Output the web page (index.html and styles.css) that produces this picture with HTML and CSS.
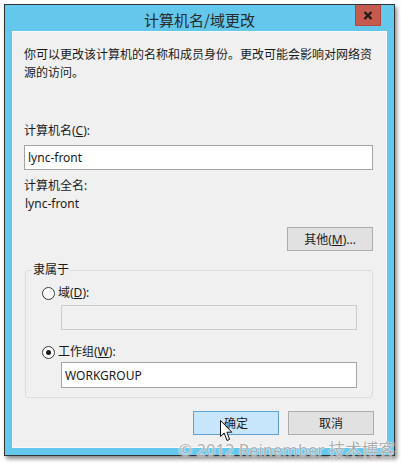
FILE: index.html
```html
<!DOCTYPE html>
<html lang="zh-CN">
<head>
    <meta charset="UTF-8">
    <meta name="viewport" content="width=device-width, initial-scale=1.0">
    <title>计算机名/域更改</title>
    <link rel="stylesheet" href="styles.css">
</head>
<body>
    <div class="window">
        <div class="titlebar">
            <span class="title">计算机名/域更改</span>
            <button class="close" type="button" aria-label="关闭">
                <svg width="10" height="9" viewBox="0 0 10 9">
                    <path d="M1.5 1 L8.5 8 M8.5 1 L1.5 8" stroke="#1a1a1a" stroke-width="2.2" fill="none"/>
                </svg>
            </button>
        </div>

        <div class="client">
            <p class="desc">你可以更改该计算机的名称和成员身份。更改可能会影响对网络资源的访问。</p>

            <label class="label first" for="pc-name">计算机名(<u>C</u>):</label>
            <input class="textbox" id="pc-name" type="text" value="lync-front">

            <div class="label full">计算机全名:</div>
            <div class="value">lync-front</div>

            <div class="more-row">
                <button class="btn" type="button">其他(<u>M</u>)...</button>
            </div>

            <fieldset class="member">
                <legend>隶属于</legend>

                <div class="radio-row first">
                    <span class="radio"></span>
                    <span>域(<u>D</u>):</span>
                </div>
                <input class="textbox sub" type="text" disabled>

                <div class="radio-row second">
                    <span class="radio checked"></span>
                    <span>工作组(<u>W</u>):</span>
                </div>
                <input class="textbox sub wg" type="text" value="WORKGROUP">
            </fieldset>

            <div class="actions">
                <button class="btn hover" type="button">确定</button>
                <button class="btn" type="button">取消</button>
            </div>
        </div>
    </div>

    <!-- mouse pointer over the OK button -->
    <svg class="cursor" width="13" height="22" viewBox="0 0 13 22">
        <path d="M0.5 0.5 L0.5 16.5 L4.2 13 L7 20.5 L9.6 19.4 L6.9 12.2 L11.8 12.2 Z" fill="#fff" stroke="#111" stroke-width="1" stroke-linejoin="miter"/>
    </svg>

    <div class="watermark">© 2012 Reinember 技术博客</div>
</body>
</html>
```

FILE: styles.css
```css
html, body {
    margin: 0;
    padding: 0;
    background: #ffffff;
}
body {
    width: 401px;
    height: 463px;
    overflow: hidden;
    position: relative;
    font-family: "Noto Sans", "Noto Sans CJK SC", sans-serif;
    font-size: 12px;
    color: #1a1a1a;
}
.window {
    margin: 4px 0 0 4px;
    width: 391px;
    height: 452px;
    box-sizing: border-box;
    border: 1px solid #333;
    background: #64c8ec;
    padding: 0 7px 7px 7px;
    box-shadow: 2px 3px 4px rgba(0,0,0,0.45);
}
.titlebar {
    height: 26px;
    display: flex;
    align-items: center;
    justify-content: center;
    position: relative;
}
.title {
    font-family: "Noto Sans CJK SC", sans-serif;
    font-size: 15px;
    color: #2a2a2a;
    margin-top: 3px;
}
.close {
    position: absolute;
    top: 0;
    right: 6px;
    width: 26px;
    height: 21px;
    padding: 0;
    border: 1px solid #b0483f;
    border-top: none;
    background: #c75a4f;
    display: flex;
    align-items: center;
    justify-content: center;
}
.client {
    height: 417px;
    box-sizing: border-box;
    background: #f0f0f0;
    border: 1px solid #f8f8f8;
    padding: 14px 13px 0 11px;
}
.desc {
    margin: 0;
    line-height: 18px;
}
.label {
    line-height: 18px;
    display: block;
}
.label.first {
    margin-top: 40px;
}
.label.full {
    margin-top: 7px;
}
.value {
    line-height: 17px;
    padding-left: 1px;
}
.textbox {
    display: block;
    box-sizing: border-box;
    width: 100%;
    height: 25px;
    margin: 5px 0 0 0;
    padding: 0 3px;
    border: 1px solid #a4a4a4;
    background: #fff;
    font-family: "Noto Sans", "Noto Sans CJK SC", sans-serif;
    font-size: 12px;
    color: #1a1a1a;
    outline: none;
}
.textbox:disabled {
    background: #f0f0f0;
    border-color: #cccccc;
}
.more-row {
    display: flex;
    justify-content: flex-end;
    margin-top: 15px;
}
.btn {
    width: 86px;
    height: 24px;
    box-sizing: border-box;
    border: 1px solid #adadad;
    background: #e1e1e1;
    font-family: "Noto Sans", "Noto Sans CJK SC", sans-serif;
    font-size: 12px;
    color: #1a1a1a;
    padding: 0;
}
.btn.hover {
    background: #c8e6fb;
    border-color: #5fa2d6;
}
.member {
    margin: 10px 0 0 1px;
    padding: 0 15px 9px 16px;
    border: 1px solid #dcdcdc;
    border-radius: 3px;
}
.member legend {
    margin-left: -10px;
    padding: 0 1px;
    line-height: 18px;
}
.radio-row {
    display: flex;
    align-items: center;
    gap: 3px;
    line-height: 18px;
}
.radio-row.first {
    margin-top: 5px;
}
.radio-row.second {
    margin-top: 13px;
}
.radio {
    width: 13px;
    height: 13px;
    box-sizing: border-box;
    border: 1px solid #3a3a3a;
    border-radius: 50%;
    background: #fff;
    position: relative;
}
.radio.checked::after {
    content: "";
    position: absolute;
    left: 3px;
    top: 3px;
    width: 5px;
    height: 5px;
    border-radius: 50%;
    background: #1a1a1a;
}
.textbox.sub {
    margin: 3px 0 0 19px;
    width: 296px;
}
.textbox.sub.wg {
    margin-top: 1px;
    height: 26px;
}
.actions {
    display: flex;
    justify-content: flex-end;
    gap: 9px;
    margin-top: 13px;
    margin-right: -1px;
}
.cursor {
    position: absolute;
    left: 220px;
    top: 420px;
}
.watermark {
    position: absolute;
    right: 6px;
    top: 440px;
    font-family: "Noto Sans", "Noto Sans CJK SC", sans-serif;
    font-size: 16.6px;
    line-height: 20px;
    color: rgba(120,120,120,0.6);
    text-shadow: 0 0 2px #fff, 0 0 1px #fff;
    white-space: nowrap;
}
```
